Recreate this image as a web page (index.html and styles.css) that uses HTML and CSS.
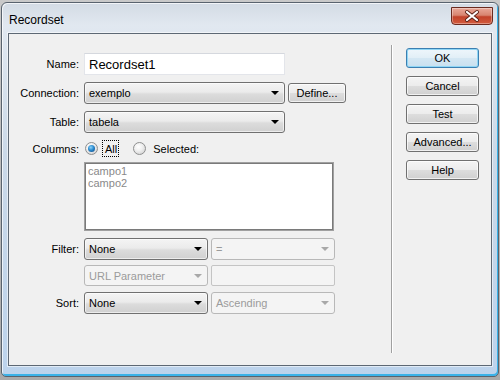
FILE: index.html
```html
<!DOCTYPE html>
<html lang="pt-BR">
<head>
    <meta charset="UTF-8">
    <title>Recordset</title>
    <link rel="stylesheet" href="styles.css">
</head>
<body>
    <div class="window">
        <div class="titlebar">
            <span class="title">Recordset</span>
            <span class="close">
                <svg width="42" height="18" viewBox="0 0 42 18">
                    <path d="M16 5 L26 13 M26 5 L16 13" stroke="#5a2016" stroke-width="4" stroke-linecap="round"/>
                    <path d="M16 5 L26 13 M26 5 L16 13" stroke="#fff" stroke-width="2.2" stroke-linecap="round"/>
                </svg>
            </span>
        </div>

        <div class="client">
            <div class="form">
                <div class="row">
                    <label>Name:</label>
                    <input class="text" type="text" value="Recordset1">
                </div>

                <div class="row">
                    <label>Connection:</label>
                    <div class="select wide"><span>exemplo</span><i class="arrow"></i></div>
                    <button class="btn define">Define...</button>
                </div>

                <div class="row row-table">
                    <label>Table:</label>
                    <div class="select wide"><span>tabela</span><i class="arrow"></i></div>
                </div>

                <div class="row row-radio">
                    <label>Columns:</label>
                    <span class="radio on"></span>
                    <span class="focus">All</span>
                    <span class="radio second"></span>
                    <span class="radio-text">Selected:</span>
                </div>

                <div class="row row-list">
                    <label></label>
                    <div class="list">
                        <div>campo1</div>
                        <div>campo2</div>
                    </div>
                </div>

                <div class="row row-filter">
                    <label>Filter:</label>
                    <div class="select small"><span>None</span><i class="arrow"></i></div>
                    <div class="select small off"><span>=</span><i class="arrow"></i></div>
                </div>

                <div class="row row-url">
                    <label></label>
                    <div class="select small off"><span>URL Parameter</span><i class="arrow"></i></div>
                    <div class="text-off"></div>
                </div>

                <div class="row">
                    <label>Sort:</label>
                    <div class="select small"><span>None</span><i class="arrow"></i></div>
                    <div class="select small off"><span>Ascending</span><i class="arrow"></i></div>
                </div>
            </div>

            <div class="sep"></div>

            <div class="actions">
                <button class="btn default">OK</button>
                <button class="btn">Cancel</button>
                <button class="btn">Test</button>
                <button class="btn">Advanced...</button>
                <button class="btn">Help</button>
            </div>
        </div>
    </div>
</body>
</html>
```

FILE: styles.css
```css
*{
    box-sizing: border-box;
}

body{
    margin: 0;
    background: linear-gradient(to bottom, #c9c9c9, #a9a9a9);
    font-family: "Liberation Sans", Arial, sans-serif;
    font-size: 11px;
    color: #000;
    height: 380px;
    overflow: hidden;
}

.window{
    margin: 2px 0 0 1px;
    width: 498px;
    height: 375px;
    padding: 0 6px;
    border: 1px solid #59636e;
    border-radius: 6px 6px 5px 5px;
    background: linear-gradient(to bottom, #d3dbe4 0%, #e1e8f0 6%, #cbd9e8 40%, #bcd3ec 100%);
    box-shadow: inset 1px 1px 0 rgba(255, 255, 255, 0.7), inset -1px -2px 0 #3ab2e8;
}

.titlebar{
    display: flex;
    justify-content: space-between;
    align-items: flex-start;
    height: 30px;
}

.title{
    font-size: 12px;
    line-height: 16px;
    padding: 9px 0 0 1px;
}

.close{
    margin: 4px -1px 0 0;
    width: 42px;
    height: 18px;
    border: 1px solid #6b2a1f;
    border-radius: 0 0 4px 4px;
    background: linear-gradient(to bottom, #e9a899 0%, #d88570 45%, #c2422a 55%, #d35c3e 100%);
    box-shadow: inset 0 0 0 1px rgba(255, 255, 255, 0.35);
}

.close svg{
    display: block;
    margin: -1px;
}

.client{
    display: flex;
    width: 484px;
    height: 333px;
    border: 1px solid #5d6874;
    background: #f0f0f0;
    box-shadow: 0 0 0 1px rgba(255, 255, 255, 0.55);
}

.form{
    width: 382px;
    padding-top: 19px;
}

.row{
    display: flex;
    align-items: center;
    height: 22px;
    margin-bottom: 7px;
}

.row label{
    width: 75px;
    padding-right: 5px;
    text-align: right;
    flex-shrink: 0;
}

.row-table{
    margin-bottom: 5px;
}

.row-radio{
    height: 21px;
    margin-bottom: 3px;
}

.row-list{
    height: 69px;
}

.row-filter{
    margin-bottom: 5px;
}

.row-url{
    height: 21px;
    margin-bottom: 6px;
}

.text{
    width: 201px;
    height: 22px;
    border: 1px solid #e3e5ea;
    border-top-color: #d5d8de;
    background: #fff;
    font-family: "Liberation Sans", Arial, sans-serif;
    font-size: 13px;
    padding: 0 4px;
    outline: none;
}

.select{
    display: flex;
    align-items: center;
    justify-content: space-between;
    height: 22px;
    padding: 0 5px 0 4px;
    border: 1px solid #707070;
    border-radius: 3px;
    background: linear-gradient(to bottom, #f4f4f4 0%, #ebebeb 45%, #dcdcdc 55%, #d0d0d0 100%);
    box-shadow: inset 0 0 0 1px rgba(255, 255, 255, 0.6);
}

.select.wide{
    width: 201px;
}

.select.small{
    width: 124px;
    margin-right: 3px;
}

.arrow{
    width: 0;
    height: 0;
    border-left: 4px solid transparent;
    border-right: 4px solid transparent;
    border-top: 4px solid #000;
}

.select.off{
    color: #9b9b9b;
    border-color: #b8b8b8;
    background: #f4f4f4;
    box-shadow: none;
}

.select.off .arrow{
    border-top-color: #a8a8a8;
}

.row-url .select{
    height: 21px;
}

.text-off{
    width: 124px;
    height: 21px;
    border: 1px solid #c4c4c4;
    border-radius: 2px;
    background: #f4f4f4;
}

.btn{
    height: 20px;
    padding: 0;
    border: 1px solid #707070;
    border-radius: 3px;
    background: linear-gradient(to bottom, #f4f4f4 0%, #ececec 48%, #dddddd 52%, #d0d0d0 100%);
    box-shadow: inset 0 0 0 1px rgba(255, 255, 255, 0.7);
    font-family: "Liberation Sans", Arial, sans-serif;
    font-size: 11px;
    color: #000;
}

.define{
    width: 58px;
    margin-left: 3px;
}

.radio{
    width: 13px;
    height: 13px;
    margin-left: 1px;
    border: 1px solid #8e8f8f;
    border-radius: 50%;
    background: radial-gradient(circle at 40% 35%, #ffffff 0%, #f0f0f0 40%, #c9c9c9 100%);
    position: relative;
}

.radio.on::after{
    content: "";
    position: absolute;
    left: 2px;
    top: 2px;
    width: 7px;
    height: 7px;
    border-radius: 50%;
    background: radial-gradient(circle at 40% 35%, #8fd4f8 0%, #2a8bd0 45%, #0d3f78 100%);
}

.focus{
    margin-left: 4px;
    padding: 2px 1px 1px 2px;
    border: 1px dotted #000;
}

.radio.second{
    margin-left: 14px;
}

.radio-text{
    margin-left: 7px;
}

.list{
    width: 250px;
    height: 69px;
    padding: 2px 3px;
    border: 1px solid #a0a0a0;
    box-shadow: inset 0 0 0 1px #7a7a7a;
    background: #fff;
    color: #8a8a8a;
    line-height: 12px;
}

.sep{
    width: 2px;
    height: 308px;
    margin-top: 11px;
    border-left: 1px solid #a0a0a0;
    border-right: 1px solid #fff;
}

.actions{
    display: flex;
    flex-direction: column;
    gap: 8px;
    margin-left: 13px;
    padding-top: 14px;
}

.actions .btn{
    width: 73px;
}

.btn.default{
    border-color: #3c7fb1;
    background: linear-gradient(to bottom, #eef6fb 0%, #e2eff7 48%, #d4e7f3 52%, #c9e0ef 100%);
    box-shadow: inset 0 0 0 1px #8fd6f5;
}
```
